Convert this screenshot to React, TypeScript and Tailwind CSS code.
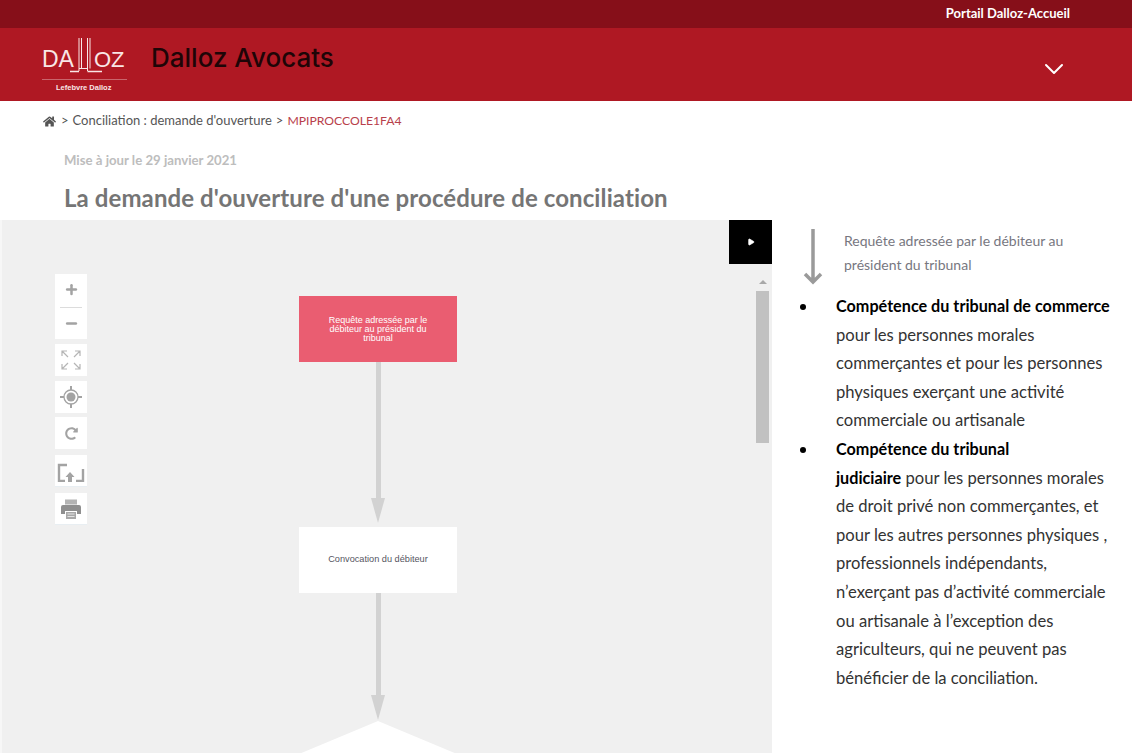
import React from "react";
import { ChevronDown, Plus, Minus, Play } from "lucide-react";
import { FaHome, FaRedoAlt } from "react-icons/fa";

const ToolButton = ({ children, className = "" }: { children: React.ReactNode; className?: string }) => (
  <div className={`w-8 h-8 bg-white flex items-center justify-center text-[#a3a3a3] ${className}`}>{children}</div>
);

const Logo = () => (
  <svg width="86" height="59" viewBox="0 0 86 59" className="shrink-0">
    <text x="0" y="32" fontFamily="Liberation Sans, sans-serif" fontSize="23" fill="#f9e6e6">DA</text>
    <path d="M37 3V36M45.5 3V36" stroke="#f9e6e6" strokeWidth="1" fill="none" />
    <path d="M39.5 3V33.5M48 3V33.5" stroke="#f9e6e6" strokeWidth="1" fill="none" />
    <path d="M28 36.5H37M45.5 36.5H60" stroke="#f9e6e6" strokeWidth="1.4" fill="none" />
    <path d="M37 33.5H45.5" stroke="#f9e6e6" strokeWidth="1" fill="none" />
    <text x="52" y="32" fontFamily="Liberation Sans, sans-serif" fontSize="22" fill="#f9e6e6">OZ</text>
    <line x1="0" y1="44.5" x2="85" y2="44.5" stroke="#c9656c" strokeWidth="1" />
    <text x="14" y="54.5" fontFamily="Liberation Sans, sans-serif" fontSize="7.5" fontWeight="700" fill="#f9e6e6">Lefebvre Dalloz</text>
  </svg>
);

const Connector = ({ height, className }: { height: number; className: string }) => (
  <svg width="14" height={height} viewBox={`0 0 14 ${height}`} className={`absolute left-[371px] ${className}`}>
    <rect x="5" y="0" width="5" height={height - 20} fill="#d2d2d2" />
    <polygon points={`0,${height - 25} 14,${height - 25} 7,${height}`} fill="#d2d2d2" />
  </svg>
);

const Diagram = () => (
  <div className="relative w-[772px] h-[533px] bg-[#f0f0f0] overflow-hidden shrink-0">
    <div className="absolute left-0 top-0 w-[2px] h-full bg-[#f7f7f7]" />
    <div className="absolute left-[729px] top-0 w-[43px] h-11 bg-black flex items-center justify-center">
      <Play size={8} fill="white" stroke="white" />
    </div>
    <div className="absolute left-[55px] top-[54px] flex flex-col">
      <div className="w-8 h-[65px] bg-white flex flex-col items-center text-[#a3a3a3]">
        <div className="h-[33px] flex items-center pb-[3px]"><Plus size={15} strokeWidth={4} /></div>
        <div className="w-[22px] h-px bg-[#dcdcdc]" />
        <div className="flex-1 flex items-center"><Minus size={15} strokeWidth={4} /></div>
      </div>
      <ToolButton className="mt-[5px]">
        <svg width="20" height="20" viewBox="0 0 20 20" fill="none" stroke="#b5b5b5" strokeWidth="1.2">
          <path d="M1 6V1H6M1 1L7 7M14 1H19V6M19 1L13 7M1 14V19H6M1 19L7 13M14 19H19V14M19 19L13 13" />
        </svg>
      </ToolButton>
      <ToolButton className="mt-[5px]">
        <svg width="24" height="24" viewBox="0 0 24 24" fill="#a3a3a3">
          <circle cx="12" cy="12" r="4.5" />
          <circle cx="12" cy="12" r="7" fill="none" stroke="#a3a3a3" strokeWidth="1.3" />
          <path d="M11 1h2v4h-2zM11 19h2v4h-2zM1 11h4v2H1zM19 11h4v2h-4z" />
        </svg>
      </ToolButton>
      <ToolButton className="mt-1"><FaRedoAlt size={13} /></ToolButton>
      <ToolButton className="mt-[6px] border-b border-[#e8eef2]">
        <svg width="28" height="22" viewBox="0 0 28 22" fill="none" stroke="#a3a3a3" strokeWidth="2.4">
          <path d="M10 5H2V21H8M19 21H26V9" />
          <path d="M13 12L17.5 17H15V22H11V17H8.5Z" fill="#a3a3a3" stroke="none" />
        </svg>
      </ToolButton>
      <ToolButton className="mt-[6px] border-b border-[#e8eef2]">
        <svg width="20" height="20" viewBox="0 0 20 20">
          <rect x="4" y="0.5" width="12" height="5" fill="#b4b4b4" />
          <path d="M2 6H18Q20 6 20 8V15H16V12H4V15H0V8Q0 6 2 6Z" fill="#8f8f8f" />
          <rect x="5" y="13" width="10" height="7" fill="#a8a8a8" />
          <path d="M6.5 15H13.5M6.5 17.5H13.5" stroke="#e4e4e4" strokeWidth="1" />
        </svg>
      </ToolButton>
    </div>

    <Connector height={161} className="top-[142px]" />
    <Connector height={127} className="top-[373px]" />

    <div className="absolute left-[299px] top-[76px] w-[158px] h-[66px] bg-[#ea5d71] flex items-center justify-center px-7 text-center text-white text-[9px] leading-[9px] font-['Liberation_Sans',sans-serif]">
      Requête adressée par le débiteur au président du tribunal
    </div>
    <div className="absolute left-[299px] top-[307px] w-[158px] h-[66px] bg-white flex items-center justify-center text-[#55555f] text-[9.2px] font-['Liberation_Sans',sans-serif]">
      Convocation du débiteur
    </div>
    <svg width="158" height="32" viewBox="0 0 158 32" className="absolute left-[299px] top-[501px]">
      <polygon points="79,0 158,33 0,33" fill="white" />
    </svg>

    <div className="absolute left-[756px] top-[60px] w-[13px] flex flex-col items-center">
      <div className="w-0 h-0 border-x-[4px] border-x-transparent border-b-[4px] border-b-[#a8a8a8]" />
      <div className="mt-[7px] w-[13px] h-[152px] bg-[#c1c1c1]" />
    </div>
  </div>
);

const Bullet = ({ children }: { children: React.ReactNode }) => (
  <li className="flex">
    <span className="w-[6px] h-[6px] rounded-full bg-black ml-[28px] mr-[30px] mt-[12px] shrink-0" />
    <div>{children}</div>
  </li>
);

const App = () => (
  <div className="w-[1132px] h-[753px] overflow-hidden bg-white font-['Lato','Noto_Sans',sans-serif]">
    <div className="h-7 bg-[#860f19] flex items-center justify-end pr-[62px] text-white text-[13px] font-bold">
      Portail Dalloz-Accueil
    </div>
    <div className="h-[73px] bg-[#af1823] flex items-center pl-[42px]">
      <Logo />
      <div className="ml-[23px] text-[26px] font-medium text-[#1e0507] font-['Inter',sans-serif] -mt-[14px]">Dalloz Avocats</div>
      <ChevronDown className="ml-auto mr-[62px] mt-2 text-white" size={32} strokeWidth={1.5} />
    </div>

    <div className="h-10 pl-[43px] flex items-center gap-1 text-[13px] text-[#555]">
      <FaHome size={13} />
      <span className="ml-px">&gt;</span>
      <span>Conciliation : demande d'ouverture</span>
      <span>&gt;</span>
      <span className="text-[#b8404b] text-[12.2px]">MPIPROCCOLE1FA4</span>
    </div>
    <div className="pl-16 pt-[9px] text-[13.2px] font-bold text-[#bdbdbd] leading-5">Mise à jour le 29 janvier 2021</div>
    <h1 className="pl-16 pt-[13px] text-[24px] tracking-[0.1px] font-bold text-[#757575] leading-[30px] h-[50px]">
      La demande d'ouverture d'une procédure de conciliation
    </h1>

    <div className="flex">
      <Diagram />
      <div className="flex-1 min-w-0">
        <div className="flex pl-[30px] pt-[9px]">
          <svg width="22" height="56" viewBox="0 0 22 56" fill="none" stroke="#9a9a9a" strokeWidth="3.5" className="shrink-0">
            <path d="M11 0V53M3 45L11 53L19 45" />
          </svg>
          <p className="ml-[20px] text-[14px] leading-6 text-[#77777f] w-[250px]">
            Requête adressée par le débiteur au président du tribunal
          </p>
        </div>
        <ul className="mt-[7px] text-[16.6px] leading-[28.6px] text-[#333]">
          <Bullet>
            <strong className="text-black text-[16.2px]">Compétence du tribunal de commerce</strong>
            <br />pour les personnes morales
            <br />commerçantes et pour les personnes
            <br />physiques exerçant une activité
            <br />commerciale ou artisanale
          </Bullet>
          <Bullet>
            <strong className="text-black text-[16.2px]">Compétence du tribunal</strong>
            <br /><strong className="text-black text-[16.2px]">judiciaire</strong> pour les personnes morales
            <br />de droit privé non commerçantes, et
            <br />pour les autres personnes physiques ,
            <br />professionnels indépendants,
            <br />n’exerçant pas d’activité commerciale
            <br />ou artisanale à l’exception des
            <br />agriculteurs, qui ne peuvent pas
            <br />bénéficier de la conciliation.
          </Bullet>
        </ul>
      </div>
    </div>
  </div>
);

export default App;
